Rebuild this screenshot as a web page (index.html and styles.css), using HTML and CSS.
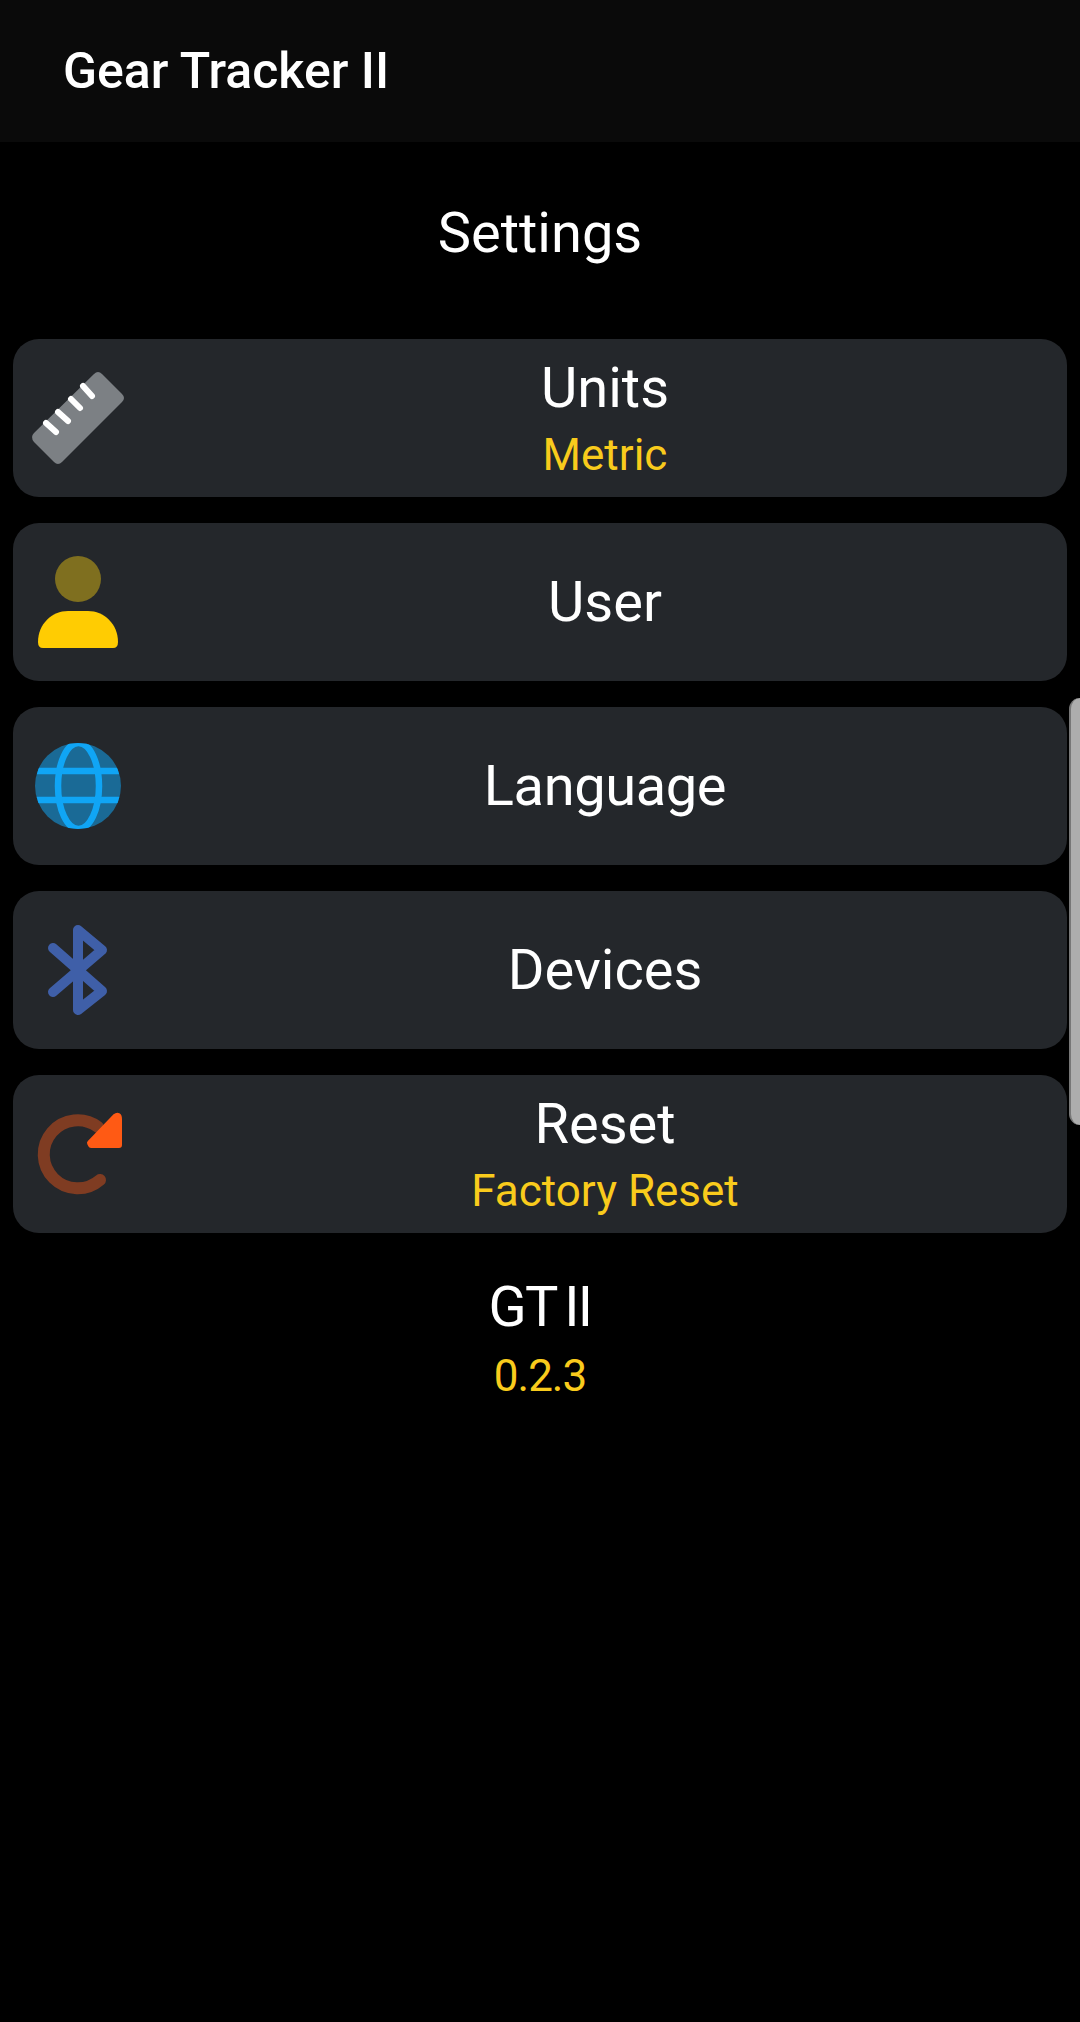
FILE: index.html
```html
<!DOCTYPE html>
<html lang="en">
<head>
    <meta charset="UTF-8">
    <meta name="viewport" content="width=device-width, initial-scale=1.0">
    <title>Gear Tracker II</title>
    <link rel="stylesheet" href="styles.css">
</head>
<body>

<header class="app-bar">
    <span class="app-title">Gear Tracker II</span>
</header>

<h1 class="page-title">Settings</h1>

<div class="menu">
    <div class="menu-item">
        <svg class="menu-icon" viewBox="0 0 96 96">
            <path d="M64 4 Q68 0 72 4 L92 24 Q96 28 92 32 L32 92 Q28 96 24 92 L4 72 Q0 67 4 63 Z" fill="#7c8084"/>
            <path d="M16 53 L26 62 M28 42 L38 51 M41 29 L50 38 M53 16 L62 26" stroke="#fff" stroke-width="6" stroke-linecap="round" fill="none"/>
        </svg>
        <div class="menu-text">
            <span class="menu-label">Units</span>
            <span class="menu-value">Metric</span>
        </div>
    </div>

    <div class="menu-item">
        <svg class="menu-icon" viewBox="0 0 96 96">
            <circle cx="48" cy="25" r="23" fill="#7f6f1f"/>
            <path d="M8 88 C8 70 22 57 38 57 H58 C74 57 88 70 88 88 Q88 94 83 94 H13 Q8 94 8 88 Z" fill="#ffcc02"/>
        </svg>
        <div class="menu-text">
            <span class="menu-label">User</span>
        </div>
    </div>

    <div class="menu-item">
        <svg class="menu-icon" viewBox="0 0 96 96">
            <defs>
                <clipPath id="globe-clip"><circle cx="48" cy="48" r="43"/></clipPath>
            </defs>
            <circle cx="48" cy="48" r="43" fill="#1a6a96"/>
            <g clip-path="url(#globe-clip)" stroke="#10a5f5" stroke-width="6.500" fill="none">
                <path d="M5 33 H91 M5 62 H91"/>
                <ellipse cx="48.500" cy="48" rx="20.500" ry="43"/>
            </g>
        </svg>
        <div class="menu-text">
            <span class="menu-label menu-label-tight">Language</span>
        </div>
    </div>

    <div class="menu-item">
        <svg class="menu-icon" viewBox="0 0 96 96">
            <path d="M23 26 L72 69 L48 88 V8 L72 28 L23 70" stroke="#3f5fa8" stroke-width="10" stroke-linecap="round" stroke-linejoin="round" fill="none"/>
        </svg>
        <div class="menu-text">
            <span class="menu-label">Devices</span>
        </div>
    </div>

    <div class="menu-item">
        <svg class="menu-icon" viewBox="0 0 96 96">
            <path d="M68 21 A34 34 0 1 0 70 74" stroke="#7f3c22" stroke-width="12" stroke-linecap="round" fill="none"/>
            <path d="M60 37 L85 11 Q89 8 89 13 V39 H61 Z" fill="#ff5a14" stroke="#ff5a14" stroke-width="6" stroke-linejoin="round"/>
        </svg>
        <div class="menu-text">
            <span class="menu-label">Reset</span>
            <span class="menu-value">Factory Reset</span>
        </div>
    </div>
</div>

<div class="version">
    <span class="menu-label version-name">GT II</span>
    <span class="menu-value version-number">0.2.3</span>
</div>

<div class="edge-handle"></div>

</body>
</html>
```

FILE: styles.css
```css
body {
    margin: 0;
    height: 2022px;
    overflow: hidden;
    position: relative;
    background-color: #000;
    color: #fff;
    font-family: Roboto, sans-serif;
}

.app-bar {
    height: 142px;
    padding-left: 63px;
    display: flex;
    align-items: center;
    background-color: #0a0a0a;
}

.app-title {
    font-size: 50px;
    font-weight: 500;
}

.page-title {
    margin: 0;
    height: 197px;
    display: flex;
    align-items: center;
    justify-content: center;
    padding-bottom: 16px;
    box-sizing: border-box;
    font-size: 56px;
    font-weight: 400;
}

.menu {
    margin: 0 13px;
    display: flex;
    flex-direction: column;
    gap: 26px;
}

.menu-item {
    height: 158px;
    padding-left: 17px;
    display: flex;
    align-items: center;
    background-color: #24272b;
    border-radius: 26px;
}

.menu-icon {
    width: 96px;
    height: 96px;
    flex-shrink: 0;
}

.menu-text {
    flex: 1;
    margin-left: 17px;
    display: flex;
    flex-direction: column;
    align-items: center;
}

.menu-label {
    font-size: 56px;
    line-height: 66px;
}

.menu-label-tight {
    letter-spacing: -0.4px;
}

.menu-value {
    margin-top: 8px;
    font-size: 44px;
    line-height: 52px;
    color: #f9cb1c;
}

.version {
    margin-top: 41px;
    display: flex;
    flex-direction: column;
    align-items: center;
}

.version-name {
    word-spacing: -4px;
    letter-spacing: -1.6px;
}

.version-number {
    margin-top: 10px;
    letter-spacing: -1px;
}

.edge-handle {
    position: absolute;
    top: 698px;
    left: 1069px;
    width: 11px;
    height: 427px;
    box-sizing: border-box;
    background-color: #adadad;
    border-left: 2px solid #777;
    border-radius: 12px 0 0 12px;
}
```
